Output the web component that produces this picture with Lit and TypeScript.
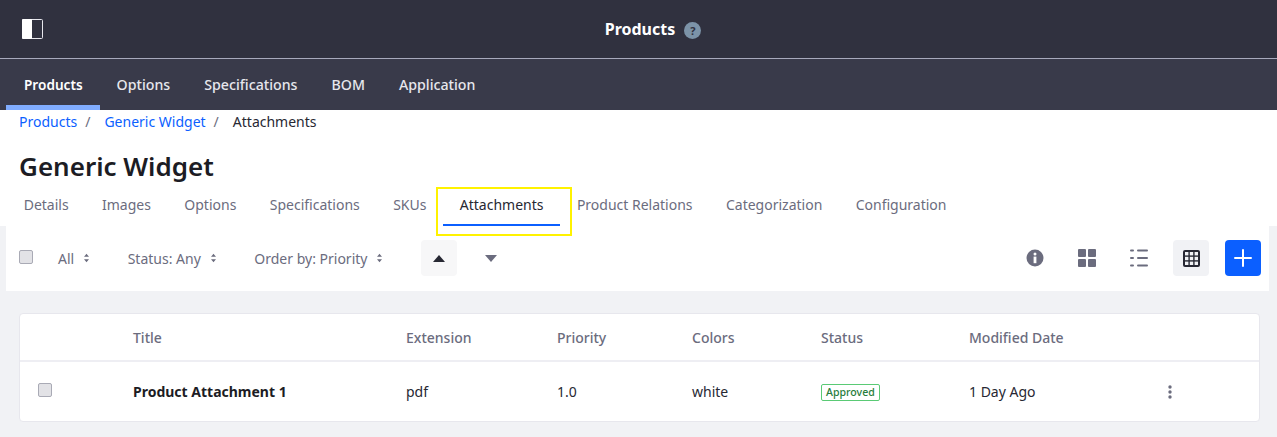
import { LitElement, html, css, svg } from 'lit';
import { customElement } from 'lit/decorators.js';

const caret = svg`<svg class="updown" viewBox="0 0 8 12" width="7" height="10"><path d="M4 1 7 4.6H1zM4 11 1 7.4h6z"/></svg>`;

const navItems = ['Products', 'Options', 'Specifications', 'BOM', 'Application'];
const tabs = ['Details', 'Images', 'Options', 'Specifications', 'SKUs', 'Attachments', 'Product Relations', 'Categorization', 'Configuration'];
const columns = ['', 'Title', 'Extension', 'Priority', 'Colors', 'Status', 'Modified Date', ''];

@customElement('app-root')
export class AppRoot extends LitElement {
  static styles = css`
    :host {
      display: block;
      width: 1277px;
      height: 437px;
      overflow: hidden;
      background: #f1f2f5;
      font-family: 'Noto Sans', 'Open Sans', sans-serif;
      font-size: 14px;
      color: #272833;
    }
    .topbar {
      height: 58px;
      background: #30313f;
      border-bottom: 1px solid #a7a9bc;
      display: grid;
      grid-template-columns: 1fr auto 1fr;
      align-items: center;
      padding-left: 22px;
    }
    .sidebar-icon { display: block; }
    .title {
      display: flex;
      align-items: center;
      gap: 9px;
      color: #fff;
      font-weight: 700;
      font-size: 16px;
      margin-left: 7px;
    }
    .help {
      width: 17px;
      height: 17px;
      border-radius: 50%;
      background: #7c93a8;
      color: #30313f;
      font-size: 11px;
      font-weight: 700;
      display: flex;
      align-items: center;
      justify-content: center;
      margin-top: 2px;
    }
    .nav {
      height: 51px;
      background: #393a4a;
      display: flex;
      padding-left: 6px;
    }
    .nav a {
      padding: 0 17px;
      line-height: 51px;
      color: #e7e7ed;
      font-size: 14.2px;
      font-weight: 500;
      box-sizing: border-box;
    }
    .nav a.active {
      padding-left: 18px;
      color: #fff;
      font-size: 13.6px;
      font-weight: 600;
      border-bottom: 5px solid #80acff;
    }
    .head {
      background: #fff;
      height: 116px;
      position: relative;
    }
    .crumbs {
      display: flex;
      padding: 1px 0 0 19px;
      height: 21px;
      line-height: 21px;
      color: #272833;
    }
    .crumbs a { color: #0b5fff; }
    .crumbs .sep { color: #6b6c7e; margin: 0 14px 0 8px; }
    h1 {
      margin: 0;
      padding: 17px 0 0 19px;
      font-size: 26px;
      line-height: 34px;
      font-weight: 600;
      color: #1c1c24;
    }
    .tabs {
      display: flex;
      padding: 6px 0 0 7px;
    }
    .tabs a {
      padding: 0 16.7px;
      height: 37px;
      line-height: 32px;
      color: #6b6c7e;
      box-sizing: border-box;
    }
    .tabs a.active { color: #272833; position: relative; }
    .tabs a.active::after {
      content: '';
      position: absolute;
      left: 0;
      right: 0;
      bottom: 0;
      height: 2px;
      background: #0b5fff;
    }
    .highlight {
      position: absolute;
      left: 436px;
      top: 77px;
      width: 136px;
      height: 49px;
      border: 2px solid #fff200;
      box-sizing: border-box;
      z-index: 2;
      pointer-events: none;
    }
    .toolbar {
      margin: 0 8px 0 6px;
      height: 65px;
      box-sizing: border-box;
      background: #fff;
      display: flex;
      align-items: center;
      padding: 0 8px 1px 13px;
      color: #6b6c7e;
    }
    .check {
      width: 14px;
      height: 14px;
      border: 1px solid #a9aab5;
      border-radius: 2px;
      background: #e2e2e6;
      flex: none;
      box-sizing: border-box;
    }
    .toolbar .check { margin: -2px 25px 0 0; }
    .filter { display: flex; align-items: center; gap: 9px; margin-right: 37.5px; }
    .updown { fill: #6b6c7e; display: block; }
    .order {
      width: 36px;
      height: 36px;
      border-radius: 4px;
      display: flex;
      align-items: center;
      justify-content: center;
    }
    .order.on { background: #f7f7f8; margin-right: 16px; }
    .spacer { flex: 1; }
    .tool {
      width: 36px;
      height: 36px;
      border-radius: 4px;
      display: flex;
      align-items: center;
      justify-content: center;
      margin-right: 16px;
    }
    .tool.on { background: #f1f2f5; }
    .tool.add { background: #0b5fff; margin-right: 0; }
    .card {
      margin: 22px 17px 0 19px;
      height: 109px;
      background: #fff;
      border: 1px solid #e7e7ed;
      border-radius: 4px;
      box-sizing: border-box;
    }
    .row {
      display: grid;
      grid-template-columns: 113px 273px 151px 135px 129px 148px 199px 1fr;
      align-items: center;
    }
    .row.header {
      height: 48px;
      box-sizing: border-box;
      border-bottom: 2px solid #eeeef3;
      color: #6b6c7e;
      font-weight: 500;
    }
    .row.body { height: 58px; box-sizing: border-box; padding-top: 1px; color: #272833; }
    .row .check { display: block; margin: -3px 0 0 18px; }
    .name { font-weight: 700; color: #1c1c24; }
    .badge {
      display: inline-block;
      font-size: 10.6px;
      line-height: 15px;
      font-weight: 500;
      color: #287d3c;
      border: 1px solid #5aca75;
      border-radius: 2px;
      padding: 0 4px;
      vertical-align: 1px;
    }
    .kebab { display: block; }
  `;

  render() {
    return html`
      <div class="topbar">
        <svg class="sidebar-icon" viewBox="0 0 21 20" width="21" height="20">
          <rect x="0.5" y="0.5" width="20" height="19" rx="1" fill="none" stroke="#e7e7ed"/>
          <rect x="0" y="0" width="10" height="20" rx="1" fill="#fff"/>
        </svg>
        <div class="title">Products <span class="help">?</span></div>
        <span></span>
      </div>
      <div class="nav">
        ${navItems.map((n, i) => html`<a class=${i === 0 ? 'active' : ''}>${n}</a>`)}
      </div>
      <div class="head">
        <div class="crumbs">
          <a>Products</a><span class="sep">/</span>
          <a>Generic Widget</a><span class="sep">/</span>
          <span>Attachments</span>
        </div>
        <h1>Generic Widget</h1>
        <div class="tabs">
          ${tabs.map(t => html`<a class=${t === 'Attachments' ? 'active' : ''}>${t}</a>`)}
        </div>
        <div class="highlight"></div>
      </div>
      <div class="toolbar">
        <span class="check"></span>
        <span class="filter">All ${caret}</span>
        <span class="filter">Status: Any ${caret}</span>
        <span class="filter">Order by: Priority ${caret}</span>
        <span class="order on">
          <svg viewBox="0 0 12 7" width="12" height="7"><path d="M6 0 12 7H0z" fill="#272833"/></svg>
        </span>
        <span class="order">
          <svg viewBox="0 0 12 7" width="12" height="7"><path d="M0 0H12L6 7z" fill="#6b6c7e"/></svg>
        </span>
        <span class="spacer"></span>
        <span class="tool">
          <svg viewBox="0 0 18 18" width="18" height="18">
            <circle cx="9" cy="9" r="8.5" fill="#6b6c7e"/>
            <circle cx="9" cy="5" r="1.5" fill="#fff"/>
            <rect x="7.6" y="7.6" width="2.8" height="6.6" fill="#fff"/>
          </svg>
        </span>
        <span class="tool">
          <svg viewBox="0 0 18 18" width="18" height="18" fill="#6b6c7e">
            <rect width="8" height="8" rx="1"/><rect x="10" width="8" height="8" rx="1"/>
            <rect y="10" width="8" height="8" rx="1"/><rect x="10" y="10" width="8" height="8" rx="1"/>
          </svg>
        </span>
        <span class="tool">
          <svg viewBox="0 0 18 18" width="18" height="18" fill="#6b6c7e">
            <rect y="0.5" width="4" height="2" rx="1"/><rect x="7" y="0.5" width="11" height="2" rx="1"/>
            <rect y="8" width="4" height="2" rx="1"/><rect x="7" y="8" width="11" height="2" rx="1"/>
            <rect y="15.5" width="4" height="2" rx="1"/><rect x="7" y="15.5" width="11" height="2" rx="1"/>
          </svg>
        </span>
        <span class="tool on">
          <svg viewBox="0 0 17 17" width="17" height="17">
            <rect width="17" height="17" rx="2" fill="#272833"/>
            <g fill="#f1f2f5">
              <rect x="2" y="2" width="3.4" height="3.4"/><rect x="6.8" y="2" width="3.4" height="3.4"/><rect x="11.6" y="2" width="3.4" height="3.4"/>
              <rect x="2" y="6.8" width="3.4" height="3.4"/><rect x="6.8" y="6.8" width="3.4" height="3.4"/><rect x="11.6" y="6.8" width="3.4" height="3.4"/>
              <rect x="2" y="11.6" width="3.4" height="3.4"/><rect x="6.8" y="11.6" width="3.4" height="3.4"/><rect x="11.6" y="11.6" width="3.4" height="3.4"/>
            </g>
          </svg>
        </span>
        <span class="tool add">
          <svg viewBox="0 0 18 18" width="18" height="18"><path d="M9 1V17M1 9H17" stroke="#fff" stroke-width="2" stroke-linecap="round"/></svg>
        </span>
      </div>
      <div class="card">
        <div class="row header">
          ${columns.map(c => html`<span>${c}</span>`)}
        </div>
        <div class="row body">
          <span><span class="check"></span></span>
          <span class="name">Product Attachment 1</span>
          <span>pdf</span>
          <span>1.0</span>
          <span>white</span>
          <span><span class="badge">Approved</span></span>
          <span>1 Day Ago</span>
          <span>
            <svg class="kebab" viewBox="0 0 4 14" width="4" height="14" fill="#6b6c7e">
              <circle cx="2" cy="2" r="1.7"/><circle cx="2" cy="7" r="1.7"/><circle cx="2" cy="12" r="1.7"/>
            </svg>
          </span>
        </div>
      </div>
    `;
  }
}
